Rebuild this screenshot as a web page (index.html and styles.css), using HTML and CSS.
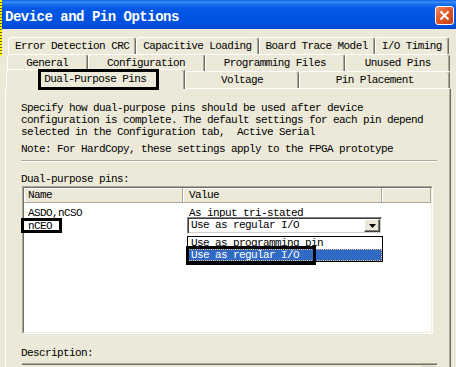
FILE: index.html
```html
<!DOCTYPE html>
<html lang="en">
  <head>
    <meta charset="UTF-8" />
    <meta name="viewport" content="width=device-width, initial-scale=1.0" />
    <title>Device and Pin Options</title>
    <link rel="stylesheet" href="styles.css">
  </head>
  <body>
    <div class="window">
      <div class="marquee"></div>
      <div class="titlebar">
        <span class="title">Device and Pin Options</span>
        <span class="close">
          <svg width="11" height="11" viewBox="0 0 11 11">
            <path d="M1.5 1.5 L9.5 9.5 M9.5 1.5 L1.5 9.5" stroke="#fff" stroke-width="2" />
          </svg>
        </span>
      </div>
      <div class="tabs">
        <div class="tab-row row1">
          <div class="tab">Error Detection CRC</div>
          <div class="tab">Capacitive Loading</div>
          <div class="tab">Board Trace Model</div>
          <div class="tab">I/O Timing</div>
        </div>
        <div class="tab-row row2">
          <div class="tab">General</div>
          <div class="tab">Configuration</div>
          <div class="tab">Programming Files</div>
          <div class="tab">Unused Pins</div>
        </div>
        <div class="tab-row row3">
          <div class="tab active">Dual-Purpose Pins<span class="mark mark-tab"></span></div>
          <div class="tab">Voltage</div>
          <div class="tab">Pin Placement</div>
        </div>
      </div>
      <div class="panel">
        <p class="intro">Specify how dual-purpose pins should be used after device<br />configuration is complete. The default settings for each pin depend<br />selected in the Configuration tab,&nbsp; Active Serial</p>
        <p class="note">Note: For HardCopy, these settings apply to the FPGA prototype</p>
        <div class="sep"></div>
        <div class="label">Dual-purpose pins:</div>
        <div class="listview">
          <div class="lv-inner">
            <div class="lv-head">
              <div class="hcell c-name">Name</div>
              <div class="hcell c-value">Value</div>
              <div class="hcell c-rest"></div>
            </div>
            <div class="lv-body">
              <div class="lv-row">
                <div class="cell c-name">ASDO,nCSO</div>
                <div class="cell c-value">As input tri-stated</div>
              </div>
              <div class="lv-row">
                <div class="cell c-name">nCEO<span class="mark mark-pin"></span></div>
                <div class="cell c-value">
                  <div class="combo">
                    <span class="combo-text">Use as regular I/O</span>
                    <span class="combo-btn">
                      <svg width="7" height="4" viewBox="0 0 7 4"><path d="M0 0 H7 L3.5 4 Z" fill="#000" /></svg>
                    </span>
                  </div>
                  <div class="dropdown">
                    <div class="option">Use as programming pin</div>
                    <div class="option selected">Use as regular I/O</div>
                    <span class="mark mark-item"></span>
                  </div>
                </div>
              </div>
            </div>
          </div>
        </div>
        <div class="label desc-label">Description:</div>
        <div class="descbox"><div class="scroll-btn"></div></div>
      </div>
    </div>
  </body>
</html>
```

FILE: styles.css
```css
* {
  box-sizing: border-box;
}
html,
body {
  margin: 0;
  height: 100%;
  overflow: hidden;
}
body {
  background-color: #ece9d8;
  font-family: "Liberation Mono", "DejaVu Sans Mono", monospace;
  font-size: 11px;
  letter-spacing: -0.6px;
  color: #000;
}
.window {
  position: relative;
  width: 456px;
  height: 367px;
  overflow: hidden;
}
.marquee {
  position: absolute;
  left: 0;
  top: 0;
  width: 2px;
  height: 56px;
  background: repeating-linear-gradient(to bottom, #ffff00 0 2px, #6b6b00 2px 3px);
  z-index: 5;
}
.titlebar {
  display: flex;
  justify-content: space-between;
  align-items: flex-start;
  height: 29px;
  padding: 0 2px 0 5px;
  background: linear-gradient(to bottom, #0a5fe8 0, #3d8ef8 2px, #1c74f1 4px, #0659e7 8px, #0054e3 50%, #0051df 85%, #0047d2 100%);
}
.title {
  padding-top: 7px;
  line-height: 20px;
  font-size: 14px;
  font-weight: bold;
  letter-spacing: -0.5px;
  color: #fff;
}
.close {
  display: flex;
  align-items: center;
  justify-content: center;
  width: 19px;
  height: 19px;
  margin-top: 6px;
  border: 1px solid #fff;
  border-radius: 3px;
  background: linear-gradient(135deg, #f08b64 0%, #e2582c 45%, #c73d13 100%);
}

/* tabs */
.tabs {
  margin-top: 8px;
  padding: 0 6px;
}
.tab-row {
  display: flex;
  height: 17px;
}
.row1 {
  padding: 0 1px 0 2px;
}
.row2 {
  padding-left: 1px;
}
.tab {
  flex: 1 1 auto;
  height: 17px;
  line-height: 16px;
  text-align: center;
  white-space: nowrap;
  border-top: 1px solid #fff;
  border-left: 1px solid #fff;
  border-right: 1px solid #716f64;
  border-radius: 3px 3px 0 0;
  box-shadow: inset -1px 0 #aca899;
  background-color: #ece9d8;
}
.tab.active {
  position: relative;
  z-index: 2;
  height: 20px;
  margin-top: -2px;
  padding: 0 2px;
  line-height: 18px;
}

/* page */
.panel {
  margin-left: 5px;
  width: 446px;
  height: 300px;
  padding: 13px 13px 0 15px;
  border-top: 1px solid #fff;
  border-left: 1px solid #fff;
  border-right: 1px solid #716f64;
  box-shadow: inset -1px 0 #aca899;
}
p {
  margin: 0;
  line-height: 12px;
}
.note {
  margin-top: 5px;
}
.sep {
  margin-top: 5px;
  height: 2px;
  border-top: 1px solid #aca899;
  border-bottom: 1px solid #fff;
}
.label {
  margin-top: 11px;
  line-height: 12px;
}

/* list view */
.listview {
  margin: 1px 0 0 1px;
  width: 411px;
  height: 148px;
  border: 1px solid;
  border-color: #aca899 #fff #fff #aca899;
}
.lv-inner {
  height: 100%;
  border: 1px solid;
  border-color: #716f64 #f1efe2 #f1efe2 #716f64;
  background-color: #fff;
}
.lv-head {
  display: flex;
  height: 15px;
}
.hcell {
  height: 15px;
  line-height: 14px;
  white-space: nowrap;
  border-right: 1px solid #aca899;
  border-bottom: 1px solid #aca899;
  box-shadow: inset 1px 1px #fff;
  background-color: #ece9d8;
}
.c-name {
  width: 159px;
  padding-left: 4px;
}
.c-value {
  width: 199px;
  padding-left: 6px;
}
.c-rest {
  flex: 1;
}
.lv-body {
  padding-top: 4px;
}
.lv-row {
  display: flex;
  line-height: 13px;
}
.cell {
  position: relative;
  height: 13px;
  white-space: nowrap;
}

/* in-place combo */
.combo {
  position: absolute;
  left: 4px;
  top: -3px;
  display: flex;
  width: 195px;
  height: 17px;
  padding: 1px;
  border: 1px solid;
  border-color: #808080 #fff #fff #808080;
  box-shadow: inset 1px 1px #404040, inset -1px -1px #d4d0c8;
  background-color: #fff;
}
.combo-text {
  flex: 1;
  padding-left: 2px;
  line-height: 13px;
}
.combo-btn {
  display: flex;
  align-items: center;
  justify-content: center;
  width: 16px;
  height: 13px;
  border: 1px solid;
  border-color: #fff #404040 #404040 #fff;
  box-shadow: inset -1px -1px #808080;
  background-color: #ece9d8;
}
.dropdown {
  position: absolute;
  left: 4px;
  top: 16px;
  z-index: 3;
  width: 196px;
  border: 1px solid #000;
  background-color: #fff;
}
.option {
  height: 12px;
  line-height: 12px;
  padding-left: 3px;
  white-space: nowrap;
  overflow: hidden;
}
.option.selected {
  background-color: #316ac5;
  color: #fff;
  outline: 1px dotted #f5c07a;
  outline-offset: -1px;
}

/* annotation boxes */
.mark {
  position: absolute;
  border: 3px solid #000;
  pointer-events: none;
}
.mark-tab {
  left: 31px;
  top: -1px;
  width: 121px;
  height: 21px;
}
.mark-pin {
  left: -3px;
  top: -2px;
  width: 41px;
  height: 15px;
}
.mark-item {
  left: -2px;
  top: 9px;
  width: 130px;
  height: 19px;
}

/* description */
.desc-label {
  margin-top: 13px;
}
.descbox {
  display: flex;
  justify-content: flex-end;
  margin: 4px 0 0 1px;
  width: 415px;
  height: 40px;
  padding: 2px 1px 0 0;
  border-top: 1px solid #aca899;
  box-shadow: inset 0 1px #716f64;
}
.scroll-btn {
  width: 15px;
  height: 15px;
  border: 1px solid #d4d0c8;
  background-color: #fff;
}
```
